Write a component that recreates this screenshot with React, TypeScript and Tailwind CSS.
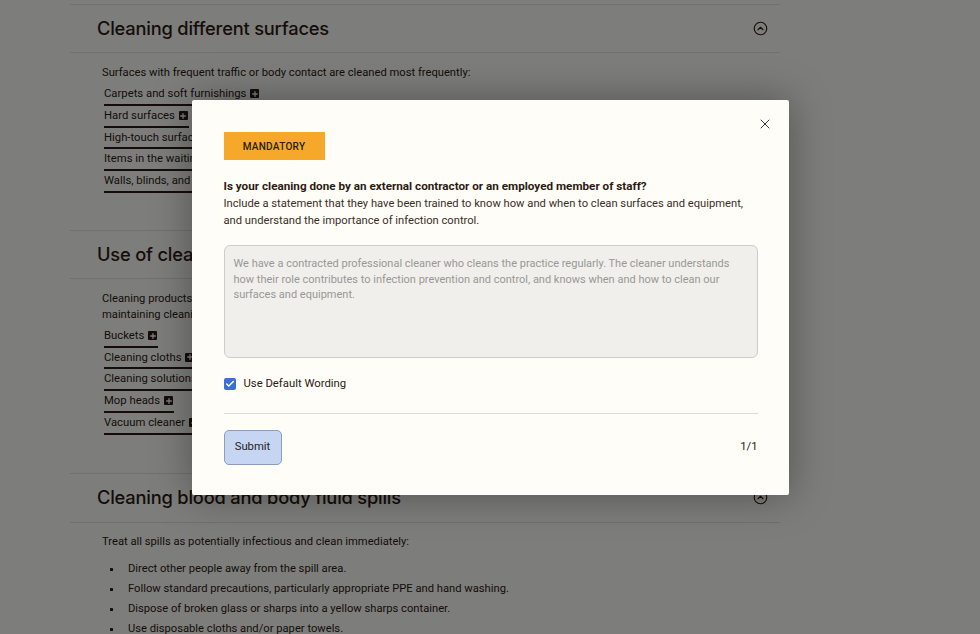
import React from "react";
import { CircleChevronUp, X, Plus, Check } from "lucide-react";

const heading = { fontFamily: "Inter, 'Noto Sans', sans-serif" };
const body = { fontFamily: "Roboto, 'Liberation Sans', sans-serif" };

// little dark square with a plus, sits after each link
const PlusBox = () => (
  <span className="ml-[4px] inline-flex h-[9px] w-[9px] items-center justify-center rounded-[1px] bg-[#2b1b12]">
    <Plus className="h-[8px] w-[8px] text-[#fbfaf6]" strokeWidth={4} />
  </span>
);

const LinkItem = ({ label }: { label: string }) => (
  <div className="flex">
    <span className="flex h-[21.75px] items-center border-b-2 border-[#2b1b12] pr-[1px] text-[11.3px] leading-none text-[#2b1b12]">
      {label}
      <PlusBox />
    </span>
  </div>
);

const SectionHeader = ({ title, tall }: { title: string; tall?: boolean }) => (
  <div
    className={
      (tall ? "h-[49px] " : "h-[48px] ") +
      "flex items-center justify-between border-b border-[#e3e0d9] pl-[27px] pr-[12px]"
    }
  >
    <h2 className="text-[18.3px] font-medium tracking-[-0.2px] text-[#2b1b12]" style={heading}>
      {title}
    </h2>
    <CircleChevronUp className="h-[15px] w-[15px] text-[#2b1b12]" strokeWidth={1.8} />
  </div>
);

const App = () => {
  return (
    <div className="relative h-[634px] w-[980px] overflow-hidden bg-[#fbfaf6]" style={body}>
      <main className="ml-[70px] w-[710px] pt-[4px]">
        {/* 1st */}
        <section className="border-t border-[#e3e0d9]">
          <SectionHeader title="Cleaning different surfaces" />
          <div className="pb-[37px] pl-[32px] pr-[20px] pt-[12px]">
            <p className="mb-[3px] text-[11.2px] leading-[16px] text-[#2b1b12]">
              Surfaces with frequent traffic or body contact are cleaned most frequently:
            </p>
            <div className="pl-[2px]">
              <LinkItem label="Carpets and soft furnishings" />
              <LinkItem label="Hard surfaces" />
              <LinkItem label="High-touch surfaces" />
              <LinkItem label="Items in the waiting room" />
              <LinkItem label="Walls, blinds, and windows" />
            </div>
          </div>
        </section>

        {/* 2nd */}
        <section className="border-t border-[#e3e0d9]">
          <SectionHeader title="Use of cleaning equipment" />
          <div className="pb-[38px] pl-[32px] pr-[20px] pt-[12px]">
            <p className="mb-[3px] text-[11.2px] leading-[16px] text-[#2b1b12]">
              Cleaning products and equipment are stored safely, with a regular schedule for checking and
              <br />
              maintaining cleaning equipment:
            </p>
            <div className="pl-[2px]">
              <LinkItem label="Buckets" />
              <LinkItem label="Cleaning cloths" />
              <LinkItem label="Cleaning solutions" />
              <LinkItem label="Mop heads" />
              <LinkItem label="Vacuum cleaner" />
            </div>
          </div>
        </section>

        {/* 3rd */}
        <section className="border-t border-[#e3e0d9]">
          <SectionHeader title="Cleaning blood and body fluid spills" tall />
          <div className="pl-[32px] pr-[20px] pt-[11px]">
            <p className="text-[11.2px] leading-[16px] text-[#2b1b12]">
              Treat all spills as potentially infectious and clean immediately:
            </p>
            <ul className="mt-[12px] space-y-[4px]">
              {[
                "Direct other people away from the spill area.",
                "Follow standard precautions, particularly appropriate PPE and hand washing.",
                "Dispose of broken glass or sharps into a yellow sharps container.",
                "Use disposable cloths and/or paper towels.",
              ].map((t) => (
                <li key={t} className="flex h-[16px] items-center text-[11.2px] text-[#2b1b12]">
                  <span className="ml-[8px] mr-[15px] h-[3px] w-[3px] rounded-[0.5px] bg-[#2b1b12]" />
                  {t}
                </li>
              ))}
            </ul>
          </div>
        </section>
      </main>

      {/* Modal overlay */}
      <div className="absolute inset-0 flex justify-center bg-black/50 pt-[100px]">
        <div className="relative h-[395px] w-[597px] rounded-[2px] bg-[#fefdf8] px-[32px] pt-[32px] shadow-[0_0_40px_rgba(0,0,0,0.35)]">
          <button className="absolute right-[16px] top-[16px] text-[#3a3a3a]">
            <X className="h-[16px] w-[16px]" strokeWidth={1.5} />
          </button>

          <div className="flex h-[28px] w-[101px] items-center justify-center bg-[#f5a82a] text-[10px] font-medium tracking-[0.3px] text-[#2b1b12]">
            MANDATORY
          </div>

          <p className="mt-[18px] text-[11.7px] font-bold leading-[17px] text-[#2b1b12]">
            Is your cleaning done by an external contractor or an employed member of staff?
          </p>
          <p className="text-[11.2px] leading-[17px] text-[#3d2e25]">
            Include a statement that they have been trained to know how and when to clean surfaces and equipment,
            and understand the importance of infection control.
          </p>

          <div className="mt-[16px] h-[113px] w-[534px] rounded-[6px] border border-[#cfcdc8] bg-[#f0efeb] px-[9px] pt-[10px] text-[11px] leading-[15.5px] text-[#999896]">
            We have a contracted professional cleaner who cleans the practice regularly. The cleaner understands
            how their role contributes to infection prevention and control, and knows when and how to clean our
            surfaces and equipment.
          </div>

          <label className="mt-[18px] flex items-center gap-[8px] text-[11.3px] text-[#2b1b12]">
            <span className="flex h-[12px] w-[12px] items-center justify-center rounded-[2px] bg-[#3a6fd8]">
              <Check className="h-[10px] w-[10px] text-white" strokeWidth={3.5} />
            </span>
            Use Default Wording
          </label>

          <div className="mt-[20px] w-[534px] border-t border-[#dedcd6]" />

          <div className="mt-[16px] flex w-[534px] items-center justify-between">
            <button className="h-[35px] w-[58px] rounded-[5px] border border-[#8d9dbb] bg-[#c6d5f1] text-[11.3px] text-[#1f1f1f]">
              Submit
            </button>
            <span className="text-[11.3px] text-[#2b1b12]">1/1</span>
          </div>
        </div>
      </div>
    </div>
  );
};

export default App;
